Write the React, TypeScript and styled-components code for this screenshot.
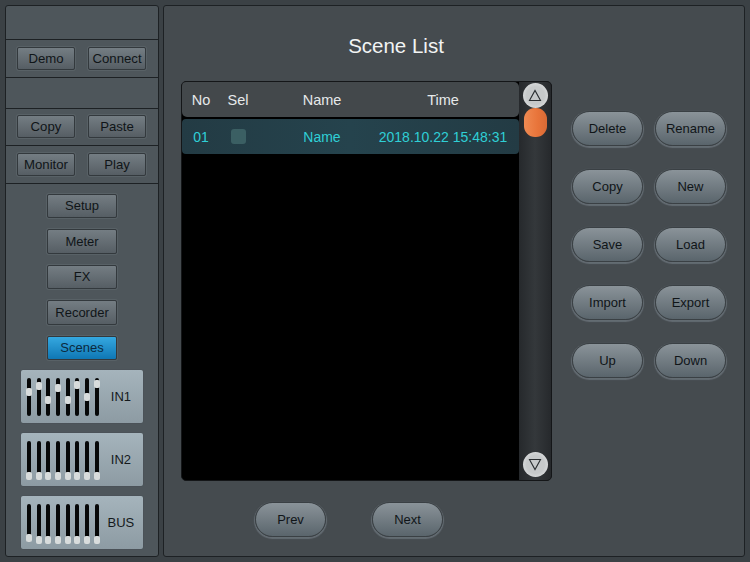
import React from 'react';
import styled, { createGlobalStyle } from 'styled-components';

const GlobalStyle = createGlobalStyle`
  html, body {
    margin: 0;
    padding: 0;
    background: #3b4145;
  }
  * {
    box-sizing: border-box;
  }
`;

const PANEL_BORDER = '#1d2124';

const sideGroups = [
  ['Demo', 'Connect'],
  ['Copy', 'Paste'],
  ['Monitor', 'Play'],
];

const navItems = ['Setup', 'Meter', 'FX', 'Recorder', 'Scenes'];

// knob offset from the top of each fader track, in px
const strips = [
  { label: 'IN1', knobs: [10, 4, 18, 6, 18, 3, 15, 2] },
  { label: 'IN2', knobs: [31, 31, 31, 31, 31, 31, 31, 31] },
  { label: 'BUS', knobs: [30, 32, 32, 32, 32, 32, 32, 32] },
];

const actionRows = [
  ['Delete', 'Rename'],
  ['Copy', 'New'],
  ['Save', 'Load'],
  ['Import', 'Export'],
  ['Up', 'Down'],
];

const Triangle: React.FC<{ down?: boolean }> = ({ down }) => (
  <svg width="14" height="13" viewBox="0 0 14 13">
    <path
      d={down ? 'M1.5 1.5 H12.5 L7 11.5 Z' : 'M1.5 11.5 H12.5 L7 1.5 Z'}
      fill="none"
      stroke="#2a2e31"
      strokeWidth="1.1"
    />
  </svg>
);

const App: React.FC = () => {
  return (
    <Page>
      <GlobalStyle />
      <Sidebar>
        <EmptySection $height={34} />
        <PairSection>
          {sideGroups[0].map((l) => (
            <SmallButton key={l}>{l}</SmallButton>
          ))}
        </PairSection>
        <EmptySection $height={31} />
        {sideGroups.slice(1).map((g) => (
          <PairSection key={g[0]}>
            {g.map((l) => (
              <SmallButton key={l}>{l}</SmallButton>
            ))}
          </PairSection>
        ))}
        <NavSection>
          {navItems.map((item) => (
            <NavButton key={item} $active={item === 'Scenes'}>
              {item}
            </NavButton>
          ))}
          <StripList>
            {strips.map((strip) => (
              <StripCard key={strip.label}>
                <FaderGroup>
                  {strip.knobs.map((k, i) => (
                    <Track key={i}>
                      <Knob style={{ top: k }} />
                    </Track>
                  ))}
                </FaderGroup>
                <StripLabel>{strip.label}</StripLabel>
              </StripCard>
            ))}
          </StripList>
        </NavSection>
      </Sidebar>

      <Main>
        <Title>Scene List</Title>
        <Content>
          <TableColumn>
            <TableFrame>
              <ListArea>
                <HeaderRow>
                  <NoCell>No</NoCell>
                  <SelCell>Sel</SelCell>
                  <NameCell>Name</NameCell>
                  <TimeCell>Time</TimeCell>
                </HeaderRow>
                <SceneRow>
                  <NoCell>01</NoCell>
                  <SelCell>
                    <CheckBox />
                  </SelCell>
                  <NameCell>Name</NameCell>
                  <TimeCell>2018.10.22 15:48:31</TimeCell>
                </SceneRow>
              </ListArea>
              <ScrollBar>
                <ScrollTop>
                  <ArrowButton>
                    <Triangle />
                  </ArrowButton>
                  <Thumb />
                </ScrollTop>
                <ArrowButton>
                  <Triangle down />
                </ArrowButton>
              </ScrollBar>
            </TableFrame>
            <Pager>
              <PillButton>Prev</PillButton>
              <PillButton>Next</PillButton>
            </Pager>
          </TableColumn>
          <Actions>
            {actionRows.map((row) => (
              <ActionRow key={row[0]}>
                {row.map((label) => (
                  <PillButton key={label}>{label}</PillButton>
                ))}
              </ActionRow>
            ))}
          </Actions>
        </Content>
      </Main>
    </Page>
  );
};

const Page = styled.div`
  width: 750px;
  height: 562px;
  padding: 5px;
  display: flex;
  gap: 4px;
  overflow: hidden;
  background: #3b4145;
  font-family: 'Liberation Sans', Arial, sans-serif;
`;

const Sidebar = styled.aside`
  width: 154px;
  flex: none;
  display: flex;
  flex-direction: column;
  border: 1px solid ${PANEL_BORDER};
  border-radius: 3px;
  background: #4e565b;
  overflow: hidden;
`;

const EmptySection = styled.div<{ $height: number }>`
  height: ${({ $height }) => $height}px;
  flex: none;
  border-bottom: 1px solid ${PANEL_BORDER};
`;

const PairSection = styled.div`
  height: 37.5px;
  flex: none;
  display: flex;
  justify-content: center;
  align-items: center;
  gap: 13px;
  padding-right: 1px;
  border-bottom: 1px solid ${PANEL_BORDER};
`;

const SmallButton = styled.div`
  width: 58px;
  height: 23px;
  display: flex;
  align-items: center;
  justify-content: center;
  font-size: 13.2px;
  color: #101518;
  border: 1px solid #33393d;
  border-radius: 2px;
  background: linear-gradient(#747d83, #565e64);
  box-shadow: 0 0 0 1px rgba(120, 130, 136, 0.25);
`;

const NavSection = styled.div`
  flex: 1;
  display: flex;
  flex-direction: column;
  align-items: center;
  padding-top: 10px;
  gap: 11px;
`;

const NavButton = styled.div<{ $active?: boolean }>`
  width: 70px;
  height: 24.5px;
  flex: none;
  display: flex;
  align-items: center;
  justify-content: center;
  font-size: 13px;
  color: ${({ $active }) => ($active ? '#0b2a3f' : '#101518')};
  border: 1px solid #33393d;
  border-radius: 2px;
  background: ${({ $active }) =>
    $active
      ? 'linear-gradient(#35a8e0, #0f77b4)'
      : 'linear-gradient(#747d83, #565e64)'};
  box-shadow: 0 0 0 1px rgba(120, 130, 136, 0.25);
`;

const StripList = styled.div`
  display: flex;
  flex-direction: column;
  gap: 10px;
  margin-top: -1px;
`;

const StripCard = styled.div`
  width: 122px;
  height: 53px;
  display: flex;
  align-items: center;
  padding-left: 6px;
  border-radius: 2px;
  background: linear-gradient(#a5b4bc, #8d9ba3);
  box-shadow: 0 0 1px rgba(40, 46, 50, 0.6);
`;

const FaderGroup = styled.div`
  display: flex;
  gap: 5.7px;
`;

const Track = styled.div`
  position: relative;
  width: 4px;
  height: 38px;
  border-radius: 2px;
  background: #070808;
`;

const Knob = styled.div`
  position: absolute;
  left: -1px;
  width: 6px;
  height: 8px;
  border-radius: 2px;
  background: #d8dcdc;
`;

const StripLabel = styled.div`
  flex: 1;
  text-align: center;
  font-size: 13px;
  color: #15191c;
`;

const Main = styled.main`
  flex: 1;
  display: flex;
  flex-direction: column;
  border: 1px solid ${PANEL_BORDER};
  border-radius: 3px;
  background: #454b4f;
  padding-left: 17px;
  overflow: hidden;
`;

const Title = styled.div`
  width: 430px;
  height: 75px;
  flex: none;
  padding-top: 28px;
  text-align: center;
  font-size: 20.5px;
  color: #f2f4f4;
`;

const Content = styled.div`
  display: flex;
  gap: 20px;
`;

const TableColumn = styled.div`
  width: 371px;
  flex: none;
  display: flex;
  flex-direction: column;
`;

const TableFrame = styled.div`
  height: 400px;
  display: flex;
  border: 1px solid #141618;
  border-radius: 5px;
  background: #000;
  overflow: hidden;
`;

const ListArea = styled.div`
  flex: 1;
  display: flex;
  flex-direction: column;
  gap: 2px;
`;

const HeaderRow = styled.div`
  height: 35px;
  display: flex;
  align-items: center;
  font-size: 14.5px;
  color: #e6e9ea;
  background: #43484b;
  border-radius: 0 5px 5px 5px;
`;

const SceneRow = styled.div`
  height: 35px;
  display: flex;
  align-items: center;
  font-size: 14px;
  color: #2fcfd6;
  background: linear-gradient(90deg, #233b44, #25434d 50%, #233b44);
  border-radius: 4px;
`;

const NoCell = styled.div`
  width: 38px;
  text-align: center;
`;

const SelCell = styled.div`
  width: 36px;
  display: flex;
  justify-content: center;
`;

const NameCell = styled.div`
  width: 112px;
  margin-left: 10px;
  text-align: center;
`;

const TimeCell = styled.div`
  width: 130px;
  text-align: center;
  white-space: nowrap;
`;

const CheckBox = styled.div`
  width: 15px;
  height: 15px;
  border-radius: 3px;
  background: #3b5f63;
`;

const ScrollBar = styled.div`
  width: 32px;
  flex: none;
  display: flex;
  flex-direction: column;
  justify-content: space-between;
  align-items: center;
  padding: 1px 0 3px;
  background: linear-gradient(90deg, #26292c, #34383b 50%, #26292c);
`;

const ScrollTop = styled.div`
  display: flex;
  flex-direction: column;
  align-items: center;
`;

const ArrowButton = styled.div`
  width: 25px;
  height: 25px;
  display: flex;
  align-items: center;
  justify-content: center;
  border-radius: 50%;
  background: radial-gradient(circle, #c6c9ca 50%, #dcdedf 80%, #a5a8aa);
`;

const Thumb = styled.div`
  width: 23px;
  height: 29px;
  border-radius: 11px;
  background: linear-gradient(90deg, #ef8a52, #e8743a 60%, #d96a35);
`;

const Pager = styled.div`
  display: flex;
  gap: 46px;
  padding: 21px 0 0 74px;
`;

const PillButton = styled.div`
  width: 71px;
  height: 35px;
  display: flex;
  align-items: center;
  justify-content: center;
  font-size: 13px;
  color: #101518;
  border-radius: 18px;
  border: 1px solid #3a4044;
  background: linear-gradient(#8a9399, #5a656c);
  box-shadow: 0 1px 1px 1px rgba(120, 130, 138, 0.6);
`;

const Actions = styled.div`
  display: flex;
  flex-direction: column;
  gap: 23px;
  padding-top: 30px;
`;

const ActionRow = styled.div`
  display: flex;
  gap: 12px;
`;

export default App;
